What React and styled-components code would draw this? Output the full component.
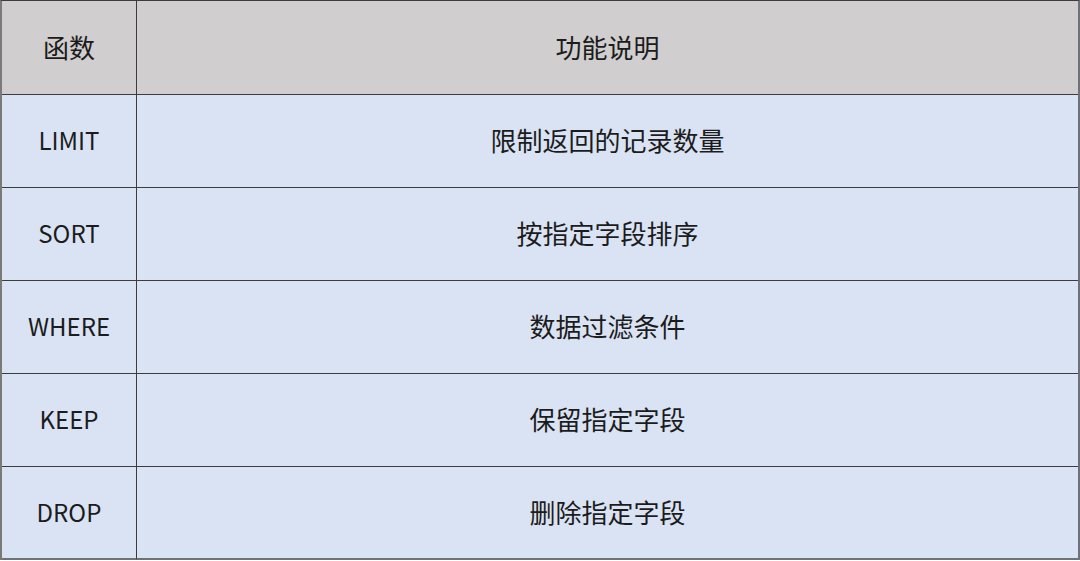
import React from 'react'
import styled, { createGlobalStyle } from 'styled-components'

const Global = createGlobalStyle`
    html, body { margin: 0; padding: 0; background: #fff; }
    body { font-family: "Noto Sans CJK SC", "Noto Sans", sans-serif; }
`;

const rows = [
    ['LIMIT', '限制返回的记录数量'],
    ['SORT', '按指定字段排序'],
    ['WHERE', '数据过滤条件'],
    ['KEEP', '保留指定字段'],
    ['DROP', '删除指定字段'],
];

const App = () => {
    return (
        <>
            <Global />
            <Table>
                <Cell head tall>函数</Cell>
                <Cell head tall>功能说明</Cell>
                {rows.map(([fn, desc]) => (
                    <React.Fragment key={fn}>
                        <Cell latin>{fn}</Cell>
                        <Cell>{desc}</Cell>
                    </React.Fragment>
                ))}
            </Table>
        </>
    )
}

export default App

const Table = styled.div`
    display: grid;
    grid-template-columns: 135px 1fr;
    width: 1080px;
    box-sizing: border-box;
    border-top: 1px solid #3c3c3c;
    border-left: 2px solid #7a7a7a;
    border-right: 2px solid #6e7278;
`;

const Cell = styled.div`
    display: flex;
    align-items: center;
    justify-content: center;
    box-sizing: border-box;
    height: ${p => (p.tall ? '94px' : '93px')};
    padding-bottom: 2px;
    background: ${p => (p.head ? '#d0cece' : '#dae3f3')};
    border-bottom: 1px solid #3c3c3c;
    font-size: ${p => (p.latin ? '24px' : '26px')};
    line-height: 1;
    color: #1c1c1c;
    &:nth-child(odd) {
        border-right: 1px solid #3c3c3c;
    }
    &:nth-last-child(-n+2) {
        border-bottom: 2px solid #6e7278;
    }
`;
